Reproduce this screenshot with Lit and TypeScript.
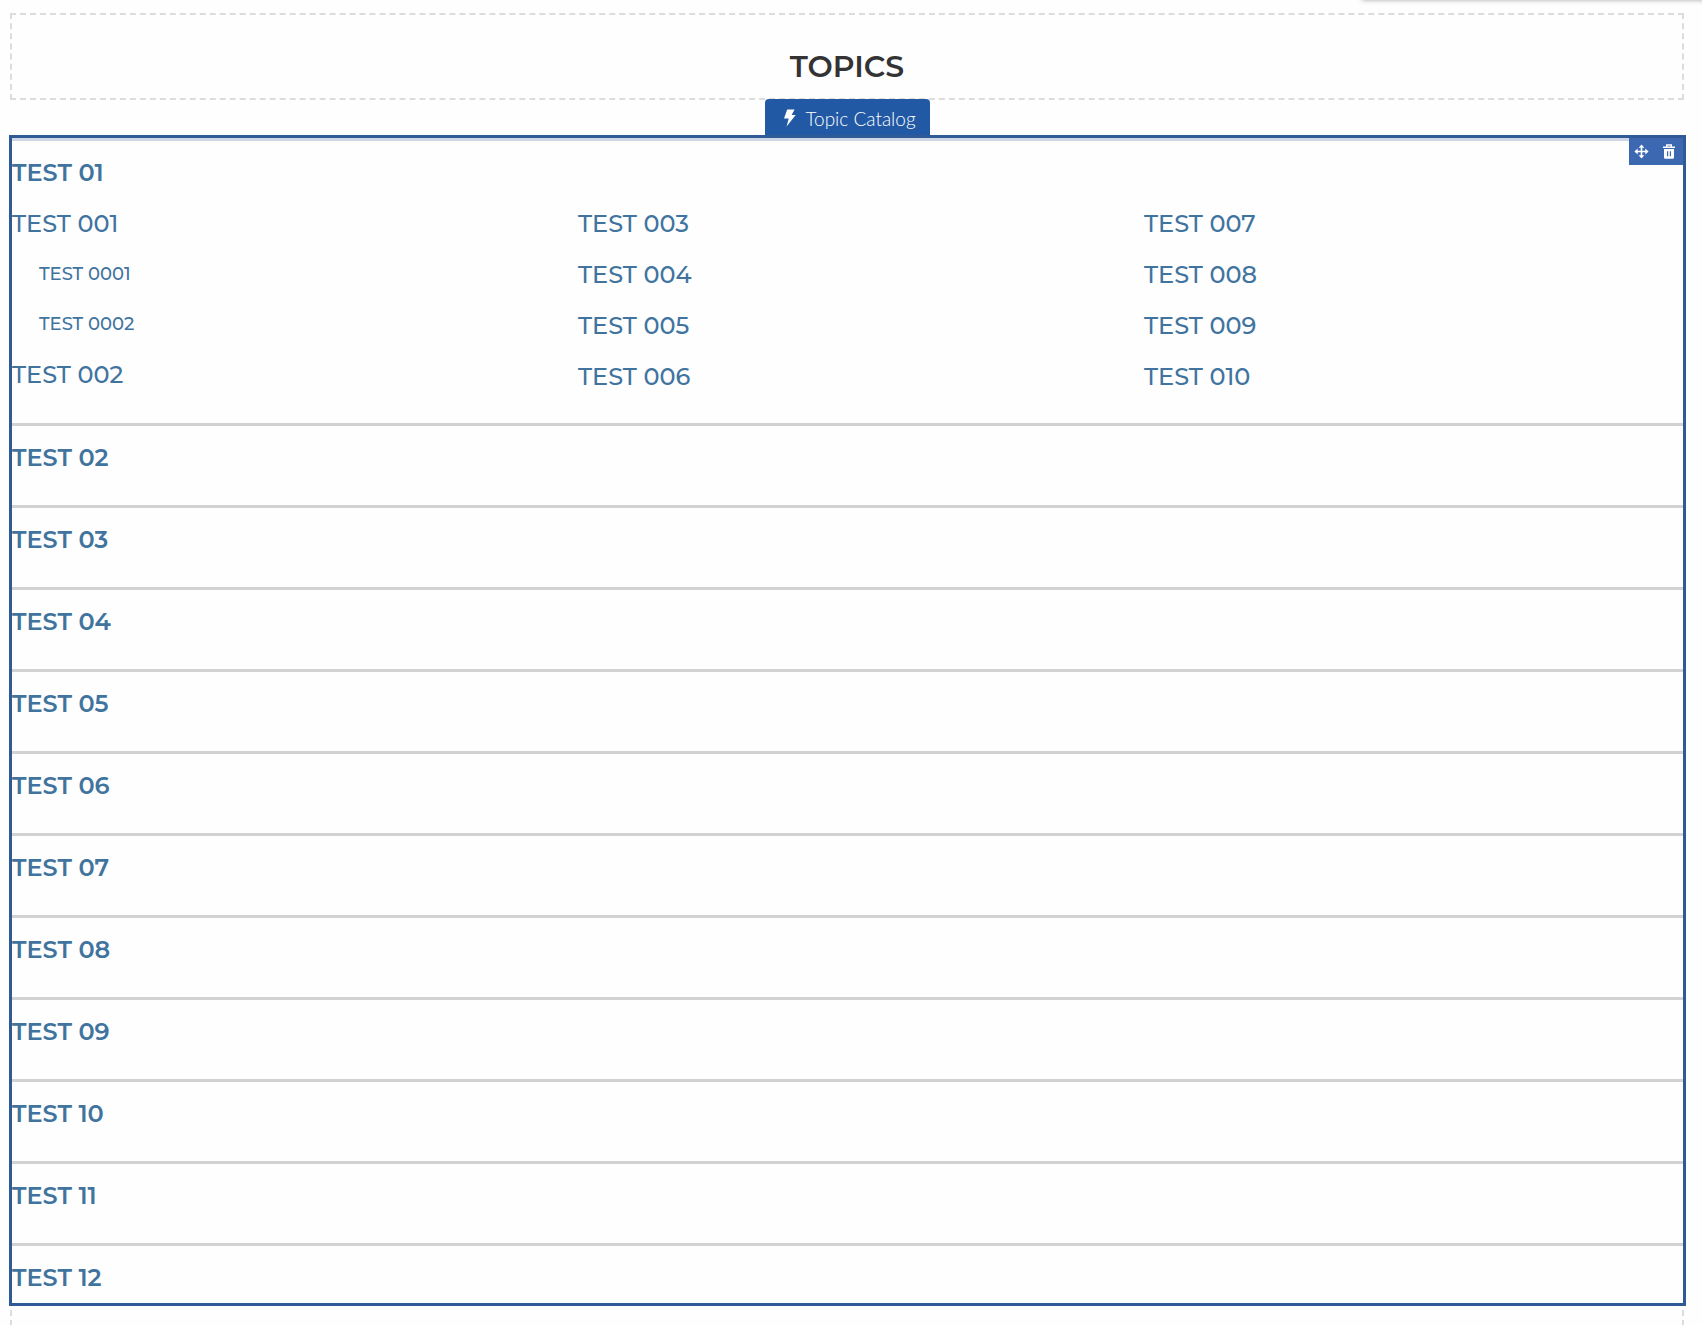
import { LitElement, html, css, nothing } from "lit";
import { customElement } from "lit/decorators.js";

interface Topic {
  name: string;
  children?: string[];
}

interface Section {
  name: string;
  columns?: Topic[][];
}

const SECTIONS: Section[] = [
  {
    name: "TEST 01",
    columns: [
      [{ name: "TEST 001", children: ["TEST 0001", "TEST 0002"] }, { name: "TEST 002" }],
      [{ name: "TEST 003" }, { name: "TEST 004" }, { name: "TEST 005" }, { name: "TEST 006" }],
      [{ name: "TEST 007" }, { name: "TEST 008" }, { name: "TEST 009" }, { name: "TEST 010" }],
    ],
  },
  ...["02", "03", "04", "05", "06", "07", "08", "09", "10", "11", "12"].map((n) => ({
    name: `TEST ${n}`,
  })),
];

@customElement("topic-catalog")
export class TopicCatalog extends LitElement {
  static styles = css`
    :host {
      display: block;
    }
    .section {
      border-top: 3px solid #d2d2d2;
      padding-bottom: 22px;
    }
    .section:first-child {
      border-top-color: #cfd6e6;
      padding-bottom: 21px;
    }
    .section:last-child {
      padding-bottom: 0;
    }
    .title {
      margin: 0;
      padding: 17px 0 10px;
      font-size: 24px;
      line-height: 30px;
      font-weight: 600;
    }
    .columns {
      display: grid;
      grid-template-columns: repeat(3, 1fr);
      column-gap: 27px;
    }
    ul {
      list-style: none;
      margin: 0;
      padding: 0;
    }
    .topic {
      font-size: 24px;
      line-height: 51px;
      font-weight: 500;
    }
    .children {
      padding-left: 27px;
      font-size: 18px;
      line-height: 50px;
    }
    a {
      color: #40749f;
      text-decoration: none;
    }
  `;

  private renderTopic(topic: Topic) {
    return html`<li class="topic">
      <a href="#">${topic.name}</a>
      ${topic.children
        ? html`<ul class="children">
            ${topic.children.map((c) => html`<li><a href="#">${c}</a></li>`)}
          </ul>`
        : nothing}
    </li>`;
  }

  render() {
    return SECTIONS.map(
      (s) => html`<section class="section">
        <h3 class="title"><a href="#">${s.name}</a></h3>
        ${s.columns
          ? html`<div class="columns">
              ${s.columns.map(
                (col) => html`<ul>${col.map((t) => this.renderTopic(t))}</ul>`
              )}
            </div>`
          : nothing}
      </section>`
    );
  }
}

@customElement("app-root")
export class AppRoot extends LitElement {
  static styles = css`
    :host {
      display: flex;
      flex-direction: column;
      position: relative;
      box-sizing: border-box;
      min-height: 100vh;
      padding: 13px 16px 0 9px;
      overflow: hidden;
      background: #fefefe;
      font-family: Montserrat, "Liberation Sans", sans-serif;
    }
    .panel-shadow {
      position: absolute;
      top: -8px;
      left: 80%;
      right: -8px;
      height: 8px;
      box-shadow: 0 0 5px rgba(0, 0, 0, 0.35);
    }
    .row {
      margin: 0 2px 0 1px;
      border: 2px dashed #dcdcdc;
    }
    .heading {
      margin: 0;
      padding: 34px 0 13px;
      font-size: 30px;
      line-height: 36px;
      font-weight: 600;
      text-align: center;
      color: #333;
    }
    .tag {
      align-self: center;
      box-sizing: border-box;
      display: flex;
      align-items: center;
      gap: 9px;
      height: 36px;
      margin-top: -1px;
      padding: 2px 14px 0 18px;
      border-radius: 4px 4px 0 0;
      background: #2259a5;
      color: #fff;
      font-family: Lato, sans-serif;
      font-size: 19px;
      font-weight: 300;
      z-index: 1;
    }
    .tag svg {
      width: 13px;
      height: 18px;
    }
    .selected {
      position: relative;
      border: 3px solid #2f5a95;
    }
    .tools {
      position: absolute;
      top: 0;
      right: 0;
      display: flex;
      background: #3b68b0;
    }
    .tools button {
      box-sizing: border-box;
      width: 27px;
      height: 27px;
      padding: 0 2px 1px 0;
      border: 0;
      background: none;
      display: grid;
      place-items: center;
      cursor: pointer;
    }
    .next {
      flex: 1 0 16px;
      margin-top: 4px;
      border-width: 0 2px;
    }
  `;

  render() {
    return html`
      <div class="panel-shadow"></div>
      <header class="row"><h1 class="heading">TOPICS</h1></header>
      <div class="tag">
        <svg viewBox="0 0 13 18" aria-hidden="true">
          <path d="M4.2 0.5h7.4L8.6 6h4.1L3.6 17.6 5.7 9.6H1z" fill="#fff" />
        </svg>
        <span>Topic Catalog</span>
      </div>
      <main class="selected">
        <topic-catalog></topic-catalog>
        <div class="tools">
          <button aria-label="Move">
            <svg width="15" height="15" viewBox="0 0 15 15" aria-hidden="true">
              <path d="M7.5 2v11M2 7.5h11" stroke="#fff" stroke-width="1.6" />
              <path
                d="M7.5 0.4l2.9 3.3H4.6zM7.5 14.6l2.9-3.3H4.6zM0.4 7.5l3.3-2.9v5.8zM14.6 7.5l-3.3-2.9v5.8z"
                fill="#fff"
              />
            </svg>
          </button>
          <button aria-label="Delete">
            <svg width="14" height="15" viewBox="0 0 14 15" aria-hidden="true">
              <path d="M4.7 2.5V1h4.6v1.5M1 3.3h12" fill="none" stroke="#fff" stroke-width="1.4" />
              <path d="M2 5h10v8.4a1.3 1.3 0 0 1-1.3 1.3H3.3A1.3 1.3 0 0 1 2 13.4z" fill="#fff" />
              <path d="M5.6 7.2v5M8.4 7.2v5" stroke="#3b68b0" stroke-width="1.2" />
            </svg>
          </button>
        </div>
      </main>
      <div class="row next"></div>
    `;
  }
}
